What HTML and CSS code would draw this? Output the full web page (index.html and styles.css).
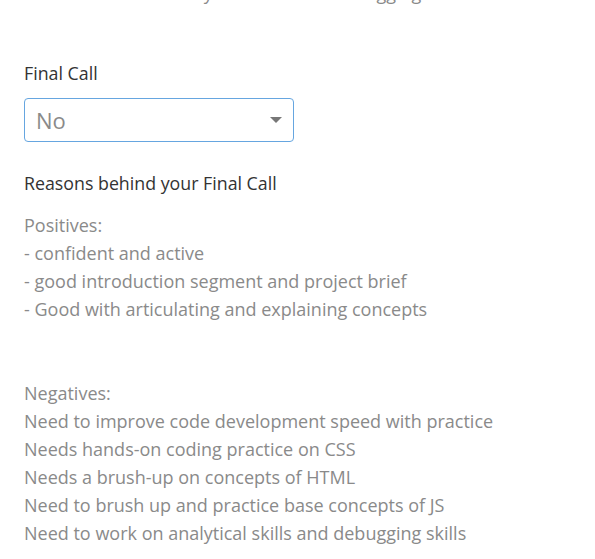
FILE: index.html
```html
<!DOCTYPE html>
<html>
<head>
<meta charset="utf-8">
<link rel="stylesheet" href="styles.css">
</head>
<body>
<div class="page">
  <div class="prev-text">Need to work on analytical skills and debugging skills</div>
  <div class="field field-call">
    <label class="label">Final Call</label>
    <div class="select">
      <span class="select-value">No</span>
      <span class="caret"></span>
    </div>
  </div>
  <div class="field field-reasons">
    <label class="label">Reasons behind your Final Call</label>
    <div class="text">Positives:
- confident and active
- good introduction segment and project brief
- Good with articulating and explaining concepts


Negatives:
Need to improve code development speed with practice
Needs hands-on coding practice on CSS
Needs a brush-up on concepts of HTML
Need to brush up and practice base concepts of JS
Need to work on analytical skills and debugging skills</div>
  </div>
</div>
</body>
</html>
```

FILE: styles.css
```css
html, body {
  margin: 0;
  padding: 0;
  background: #ffffff;
  overflow: hidden;
}
.page {
  display: flex;
  flex-direction: column;
  padding: 0 24px;
  font-family: "Open Sans", "Noto Sans", sans-serif;
  margin-top: -21px;
}
.prev-text {
  font-size: 18px;
  line-height: 28px;
  color: #8a8a8a;
  white-space: nowrap;
}
.field {
  display: flex;
  flex-direction: column;
  align-items: flex-start;
}
.field-call {
  margin-top: 54px;
}
.field-reasons {
  margin-top: 29px;
}
.label {
  font-size: 17.8px;
  color: #333333;
  line-height: 24px;
}
.select {
  margin-top: 13px;
  width: 270px;
  height: 44px;
  box-sizing: border-box;
  border: 1px solid #66a6e0;
  border-radius: 4px;
  display: flex;
  align-items: center;
  justify-content: space-between;
  padding: 0 11px 0 11px;
}
.select-value {
  font-size: 22px;
  color: #8a8a8a;
}
.caret {
  width: 0;
  height: 0;
  border-left: 6px solid transparent;
  border-right: 6px solid transparent;
  border-top: 6px solid #777777;
}
.text {
  margin-top: 16px;
  white-space: pre;
  font-size: 18px;
  line-height: 28px;
  color: #8a8a8a;
}
```
